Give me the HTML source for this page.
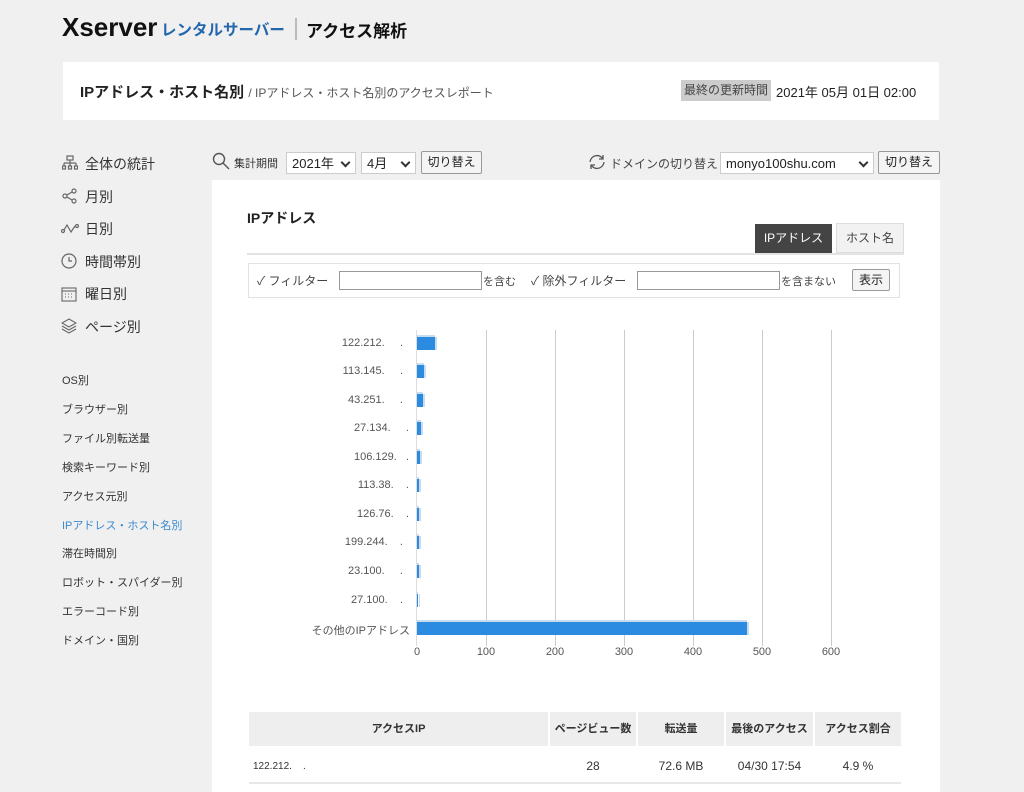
<!DOCTYPE html>
<html><head><meta charset="utf-8"><style>
*{margin:0;padding:0;box-sizing:border-box}
body{width:1024px;height:792px;overflow:hidden;background:#f0f0f0;font-family:"Liberation Sans","Noto Sans CJK JP",sans-serif;color:#333;position:relative}
.a{position:absolute;white-space:nowrap}
.sel{position:absolute;background:#fff;border:1px solid #ccc;font-size:13px;padding:1px 5px;height:22px;line-height:19px;color:#222}
.sel:after{content:"";position:absolute;right:6px;top:6px;width:5px;height:5px;border-right:2px solid #333;border-bottom:2px solid #333;transform:rotate(45deg)}
.btn{position:absolute;background:#f4f4f4;border:1px solid #999;border-radius:2px;font-size:12px;height:23px;line-height:21px;text-align:center;color:#222}
.side1{position:absolute;left:85px;font-size:14px;color:#333}
.side2{position:absolute;left:62px;font-size:11px;color:#333}
.ip{position:absolute;font-size:11px;color:#555;text-align:right;width:120px;left:283px}
.bar{position:absolute;left:417px;height:13px;background:#2b8be0;box-shadow:0 -2px 0 #c8dbef,2px 0 0 #c8dbef}
.gl{position:absolute;top:330px;height:316px;width:1px;background:#ccc}
.tk{position:absolute;top:646px;font-size:11px;color:#555;width:40px;text-align:center}
</style></head><body>
<div class="a" style="left:62px;top:12px;font-size:26px;font-weight:bold;color:#111;letter-spacing:0">Xserver</div>
<div class="a" style="left:161px;top:18px;font-size:15.5px;font-weight:bold;color:#2467ad">レンタルサーバー</div>
<div class="a" style="left:295px;top:18px;width:2px;height:22px;background:#bbb"></div>
<div class="a" style="left:306px;top:17px;font-size:17px;font-weight:bold;color:#111">アクセス解析</div>

<div class="a" style="left:63px;top:62px;width:876px;height:58px;background:#fff"></div>
<div class="a" style="left:80px;top:81px;font-size:15px;font-weight:bold;color:#222">IPアドレス・ホスト名別 <span style="font-size:12px;font-weight:normal;color:#555">/ IPアドレス・ホスト名別のアクセスレポート</span></div>
<div class="a" style="left:681px;top:80px;width:90px;height:21px;background:#ccc;font-size:12px;line-height:21px;text-align:center;color:#444">最終の更新時間</div>
<div class="a" style="left:776px;top:82px;font-size:13px;color:#222">2021年 05月 01日 02:00</div>

<svg class="a" style="left:62px;top:155px" width="16" height="16" viewBox="0 0 16 16" fill="none" stroke="#666" stroke-width="1.2"><rect x="5" y="1" width="6" height="4"/><path d="M8 5v3M2 8h12M2 8v3M8 8v3M14 8v3"/><rect x="0.5" y="11" width="3" height="3"/><rect x="6.5" y="11" width="3" height="3"/><rect x="12.5" y="11" width="3" height="3"/></svg>
<div class="side1" style="top:154px">全体の統計</div>
<svg class="a" style="left:62px;top:188px" width="16" height="16" viewBox="0 0 16 16" fill="none" stroke="#666" stroke-width="1.2"><circle cx="3" cy="8" r="2"/><circle cx="12" cy="3" r="2"/><circle cx="12" cy="13" r="2"/><path d="M5 7l5-3M5 9l5 3"/></svg>
<div class="side1" style="top:187px">月別</div>
<svg class="a" style="left:61px;top:221px" width="18" height="14" viewBox="0 0 18 14" fill="none" stroke="#666" stroke-width="1.2"><circle cx="2" cy="10" r="1.5"/><circle cx="16" cy="5" r="1.5"/><path d="M3 9l3-5 4 7 4-6"/></svg>
<div class="side1" style="top:219px">日別</div>
<svg class="a" style="left:61px;top:253px" width="16" height="16" viewBox="0 0 16 16" fill="none" stroke="#666" stroke-width="1.2"><circle cx="8" cy="8" r="7"/><path d="M8 4v4h3"/></svg>
<div class="side1" style="top:252px">時間帯別</div>
<svg class="a" style="left:61px;top:286px" width="16" height="16" viewBox="0 0 16 16" fill="none" stroke="#666" stroke-width="1.1"><rect x="1" y="2" width="14" height="13"/><path d="M1 5h14" /><path d="M4 8h1M7 8h1M10 8h1M4 11h1M7 11h1M10 11h1" stroke-dasharray="1 1"/></svg>
<div class="side1" style="top:284px">曜日別</div>
<svg class="a" style="left:61px;top:318px" width="16" height="16" viewBox="0 0 16 16" fill="none" stroke="#666" stroke-width="1.1"><path d="M8 1l7 4-7 4-7-4z"/><path d="M1 8l7 4 7-4M1 11l7 4 7-4"/></svg>
<div class="side1" style="top:317px">ページ別</div>

<div class="side2" style="top:372px">OS別</div>
<div class="side2" style="top:401px">ブラウザー別</div>
<div class="side2" style="top:430px">ファイル別転送量</div>
<div class="side2" style="top:459px">検索キーワード別</div>
<div class="side2" style="top:488px">アクセス元別</div>
<div class="side2" style="top:517px;color:#3a8ad0">IPアドレス・ホスト名別</div>
<div class="side2" style="top:545px">滞在時間別</div>
<div class="side2" style="top:574px">ロボット・スパイダー別</div>
<div class="side2" style="top:603px">エラーコード別</div>
<div class="side2" style="top:632px">ドメイン・国別</div>

<svg class="a" style="left:212px;top:152px" width="18" height="18" viewBox="0 0 18 18" fill="none" stroke="#555" stroke-width="1.4"><circle cx="7" cy="7" r="5.5"/><path d="M11 11l6 6"/></svg>
<div class="a" style="left:234px;top:155px;font-size:11px;color:#333">集計期間</div>
<div class="sel" style="left:286px;top:152px;width:70px">2021年</div>
<div class="sel" style="left:361px;top:152px;width:55px">4月</div>
<div class="btn" style="left:421px;top:151px;width:61px">切り替え</div>
<svg class="a" style="left:587px;top:153px" width="20" height="18" viewBox="0 0 20 18" fill="none" stroke="#555" stroke-width="1.3"><path d="M3 9a7 7 0 0 1 13-3M17 9a7 7 0 0 1-13 3"/><path d="M16 2v4h-4M4 16v-4h4"/></svg>
<div class="a" style="left:610px;top:155px;font-size:12px;color:#444">ドメインの切り替え</div>
<div class="sel" style="left:720px;top:152px;width:154px">monyo100shu.com</div>
<div class="btn" style="left:878px;top:151px;width:62px">切り替え</div>

<div class="a" style="left:212px;top:180px;width:728px;height:612px;background:#fff"></div>
<div class="a" style="left:247px;top:208px;font-size:14px;font-weight:bold;color:#222">IPアドレス</div>
<div class="a" style="left:755px;top:224px;width:77px;height:29px;background:#444;color:#fff;font-size:12px;line-height:29px;text-align:center">IPアドレス</div>
<div class="a" style="left:836px;top:223px;width:68px;height:30px;background:#f2f2f2;border:1px solid #ddd;color:#444;font-size:12px;line-height:29px;text-align:center">ホスト名</div>
<div class="a" style="left:247px;top:253px;width:657px;height:2px;background:#e3e3e3"></div>
<div class="a" style="left:248px;top:263px;width:652px;height:35px;border:1px solid #e2e2e2"></div>
<div class="a" style="left:257px;top:272px;font-size:12px;color:#444">✓ フィルター</div>
<div class="a" style="left:339px;top:271px;width:143px;height:19px;border:1px solid #999;background:#fff"></div>
<div class="a" style="left:483px;top:273px;font-size:11px;color:#444">を含む</div>
<div class="a" style="left:531px;top:272px;font-size:12px;color:#444">✓ 除外フィルター</div>
<div class="a" style="left:637px;top:271px;width:143px;height:19px;border:1px solid #999;background:#fff"></div>
<div class="a" style="left:781px;top:273px;font-size:11px;color:#444">を含まない</div>
<div class="btn" style="left:852px;top:269px;width:38px;height:22px;line-height:20px">表示</div>

<div class="gl" style="left:486px"></div><div class="gl" style="left:555px"></div><div class="gl" style="left:624px"></div><div class="gl" style="left:693px"></div><div class="gl" style="left:762px"></div><div class="gl" style="left:831px"></div>
<div class="a" style="left:416px;top:330px;width:1px;height:316px;background:#ddd"></div>
<div class="ip" style="top:337px">122.212.&nbsp;&nbsp;&nbsp;&nbsp;&nbsp;.</div><div class="bar" style="top:337px;width:18px"></div>
<div class="ip" style="top:365px">113.145.&nbsp;&nbsp;&nbsp;&nbsp;&nbsp;.</div><div class="bar" style="top:365px;width:7px"></div>
<div class="ip" style="top:394px">43.251.&nbsp;&nbsp;&nbsp;&nbsp;&nbsp;.</div><div class="bar" style="top:394px;width:6px"></div>
<div class="ip" style="top:422px;left:289px">27.134.&nbsp;&nbsp;&nbsp;&nbsp;&nbsp;.</div><div class="bar" style="top:422px;width:4px"></div>
<div class="ip" style="top:451px;left:289px">106.129.&nbsp;&nbsp;&nbsp;.</div><div class="bar" style="top:451px;width:3px"></div>
<div class="ip" style="top:479px;left:289px">113.38.&nbsp;&nbsp;&nbsp;&nbsp;.</div><div class="bar" style="top:479px;width:2px"></div>
<div class="ip" style="top:508px;left:289px">126.76.&nbsp;&nbsp;&nbsp;&nbsp;.</div><div class="bar" style="top:508px;width:2px"></div>
<div class="ip" style="top:536px">199.244.&nbsp;&nbsp;&nbsp;&nbsp;.</div><div class="bar" style="top:536px;width:2px"></div>
<div class="ip" style="top:565px">23.100.&nbsp;&nbsp;&nbsp;&nbsp;&nbsp;.</div><div class="bar" style="top:565px;width:2px"></div>
<div class="ip" style="top:594px">27.100.&nbsp;&nbsp;&nbsp;&nbsp;.</div><div class="bar" style="top:594px;width:1px"></div>
<div class="ip" style="top:622px;left:290px">その他のIPアドレス</div><div class="bar" style="top:622px;width:330px"></div>
<div class="tk" style="left:397px">0</div><div class="tk" style="left:466px">100</div><div class="tk" style="left:535px">200</div><div class="tk" style="left:604px">300</div><div class="tk" style="left:673px">400</div><div class="tk" style="left:742px">500</div><div class="tk" style="left:811px">600</div>

<div class="a" style="left:249px;top:712px;width:299px;height:34px;background:#eee;font-size:11px;line-height:34px;text-align:center;font-weight:bold;color:#333">アクセスIP</div>
<div class="a" style="left:550px;top:712px;width:86px;height:34px;background:#eee;font-size:11px;line-height:34px;text-align:center;font-weight:bold;color:#333">ページビュー数</div>
<div class="a" style="left:638px;top:712px;width:86px;height:34px;background:#eee;font-size:11px;line-height:34px;text-align:center;font-weight:bold;color:#333">転送量</div>
<div class="a" style="left:726px;top:712px;width:87px;height:34px;background:#eee;font-size:11px;line-height:34px;text-align:center;font-weight:bold;color:#333">最後のアクセス</div>
<div class="a" style="left:815px;top:712px;width:86px;height:34px;background:#eee;font-size:11px;line-height:34px;text-align:center;font-weight:bold;color:#333">アクセス割合</div>
<div class="a" style="left:253px;top:761px;font-size:10px;color:#333">122.212.&nbsp;&nbsp;&nbsp;&nbsp;.</div>
<div class="a" style="left:550px;top:759px;width:86px;text-align:center;font-size:12px">28</div>
<div class="a" style="left:638px;top:759px;width:86px;text-align:center;font-size:12px">72.6 MB</div>
<div class="a" style="left:726px;top:759px;width:87px;text-align:center;font-size:12px">04/30 17:54</div>
<div class="a" style="left:815px;top:759px;width:86px;text-align:center;font-size:12px">4.9 %</div>
<div class="a" style="left:249px;top:782px;width:652px;height:2px;background:#e8e8e8"></div>
</body></html>
